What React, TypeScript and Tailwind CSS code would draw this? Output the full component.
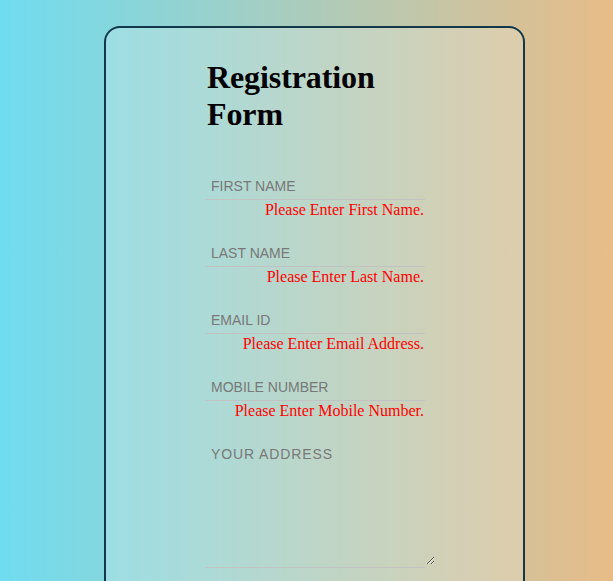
const fields = [
  { name: "firstName", placeholder: "FIRST NAME", error: "Please Enter First Name." },
  { name: "lastName", placeholder: "LAST NAME", error: "Please Enter Last Name." },
  { name: "email", placeholder: "EMAIL ID", error: "Please Enter Email Address." },
  { name: "mobile", placeholder: "MOBILE NUMBER", error: "Please Enter Mobile Number." },
];

export default function App() {
  return (
    <div className="min-h-[581px] w-full overflow-hidden bg-[linear-gradient(to_right,#6fdcf0,#e8bc88)] pl-4 pt-[26px]">
      <div className="mx-auto w-[421px] rounded-2xl border-2 border-[#12384a] bg-white/20 pb-24 pl-[99px] pt-[31px]">
        <h1 className="ml-[2px] w-[220px] font-['Liberation_Serif',serif] text-[32px] font-bold leading-[37px] tracking-[-0.1px] text-black">
          Registration Form
        </h1>

        <form className="mt-[42px] w-[230px]">
          {/* text inputs with their error messages */}
          {fields.map((f) => (
            <div key={f.name} className="mb-[23px] w-[220px]">
              <input
                type="text"
                name={f.name}
                placeholder={f.placeholder}
                className="block h-[25px] w-[220px] border-b border-[#c2c2c2] bg-transparent pb-[2px] pl-[6px] font-['Liberation_Sans',Arial,sans-serif] text-[14px] text-[#555] outline-none placeholder:text-[#787878]"
              />
              <p className="mt-[1px] w-[219px] text-right font-['Liberation_Serif',serif] text-[16px] leading-[18px] text-[#ff0000]">
                {f.error}
              </p>
            </div>
          ))}

          <textarea
            name="address"
            placeholder="YOUR ADDRESS"
            className="block h-[122px] w-[230px] bg-transparent pl-[6px] pt-[3px] font-['Liberation_Sans',Arial,sans-serif] text-[14px] leading-[16px] tracking-[0.9px] text-[#555] outline-none placeholder:text-[#787878]"
          />
          <div className="mt-[2px] h-px w-[220px] bg-[#c2c2c2]" />
        </form>
      </div>
    </div>
  );
}
